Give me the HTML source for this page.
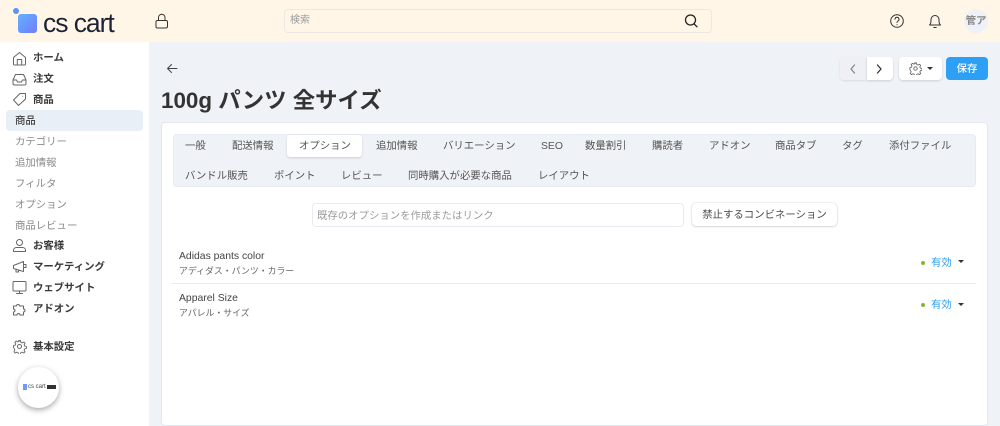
<!DOCTYPE html>
<html lang="ja"><head><meta charset="utf-8">
<style>
html,body{margin:0;padding:0;width:1000px;height:426px;overflow:hidden;background:#eff3f8}
body{font-family:"Liberation Sans","Noto Sans CJK JP",sans-serif;position:relative;color:#333}
.a,.t,.n,.s,.b{position:absolute;white-space:nowrap}
.t{font-size:10.4px;line-height:16px;color:#555;margin-top:1px}
.n{font-size:10.4px;line-height:16px;font-weight:700;color:#3a3a3a;left:33px;margin-top:1px}
.s{font-size:10.4px;line-height:16px;color:#8a8a8a;left:15px;margin-top:1px}
svg{position:absolute;fill:none;stroke:#666;stroke-width:1;stroke-linecap:round;stroke-linejoin:round}
</style></head><body>
<div class="a" style="left:0;top:0;width:1000px;height:42px;background:#fff6e8"></div>
<div class="a" style="left:13px;top:8px;width:6px;height:6px;border-radius:50%;background:#5c93fb"></div>
<div class="a" style="left:18px;top:14px;width:19px;height:19px;border-radius:3px;background:linear-gradient(135deg,#66b0ff,#6f7dfb)"></div>
<div class="a" style="left:43px;top:8px;font-size:26.500px;line-height:30px;letter-spacing:-1.050px;color:#1d2236">cs cart</div>
<svg style="left:154px;top:13px" width="16" height="17" viewBox="0 0 16 17"><rect x="2" y="7.500" width="11.500" height="7.500" rx="1.500" stroke="#333"/><path d="M4.500 7.500V4.500a3.200 3.200 0 0 1 6.500 0v3" stroke="#333"/></svg>
<div class="a" style="left:284px;top:9px;width:426px;height:22px;border:1px solid #ece8df;border-radius:4px"></div>
<div class="a" style="left:290px;top:14px;font-size:10px;line-height:14px;color:#9b9b9b">検索</div>
<svg style="left:683px;top:13px" width="16" height="16" viewBox="0 0 16 16"><circle cx="7.500" cy="7" r="5" stroke="#222" stroke-width="1.300"/><path d="M11 10.800l3 3" stroke="#222" stroke-width="1.300"/></svg>
<svg style="left:889px;top:13px" width="16" height="16" viewBox="0 0 16 16"><circle cx="8" cy="8" r="6.300" stroke="#333"/><path d="M6 6.300a2 2 0 1 1 3 1.700c-.7.400-1 .8-1 1.500M8 11.600v.2" stroke="#333"/></svg>
<svg style="left:927px;top:13px" width="16" height="16" viewBox="0 0 16 16"><path d="M2.500 12h11c-1.200-1.200-1.500-2-1.500-5.500a4 4 0 0 0-8 0C4 10 3.700 10.800 2.500 12zM6.800 14.500h2.400" stroke="#333"/></svg>
<div class="a" style="left:964px;top:9px;width:24px;height:24px;border-radius:50%;background:#eef1f7;font-size:10.400px;line-height:26px;text-align:center;font-weight:700;color:#888">管ア</div>

<div class="a" style="left:0;top:42px;width:149px;height:384px;background:#fff"></div>
<div class="a" style="left:6px;top:110px;width:137px;height:21px;border-radius:4px;background:#e9eff7"></div>
<svg style="left:12px;top:51px" width="15" height="15" viewBox="0 0 15 15"><path d="M1.500 6.500L7.500 1.500l6 5V13a1 1 0 0 1-1 1h-10a1 1 0 0 1-1-1zM5.300 14V8.500h4.400V14"/></svg>
<div class="n" style="top:50px">ホーム</div>
<svg style="left:12px;top:72px" width="15" height="15" viewBox="0 0 15 15"><path d="M1 8l2.500-5.500h8L14 8v3.500a1.500 1.500 0 0 1-1.500 1.500h-10A1.500 1.500 0 0 1 1 11.500zM1 8h3.500l1 2h4l1-2H14"/></svg>
<div class="n" style="top:71px">注文</div>
<svg style="left:12px;top:92px" width="15" height="15" viewBox="0 0 15 15"><path d="M13.500 1.500v5.500l-7 6.500-5-5.500 6.500-6.500zM10.800 4.200v.1"/></svg>
<div class="n" style="top:92px">商品</div>
<div class="n" style="left:15px;top:113px;font-weight:500;color:#444">商品</div>
<div class="s" style="top:134px">カテゴリー</div>
<div class="s" style="top:155px">追加情報</div>
<div class="s" style="top:176px">フィルタ</div>
<div class="s" style="top:197px">オプション</div>
<div class="s" style="top:218px">商品レビュー</div>
<svg style="left:12px;top:238px" width="15" height="15" viewBox="0 0 15 15"><circle cx="7.500" cy="4.500" r="3"/><path d="M1.500 13.500v-1.500a3 3 0 0 1 3-2.500h6a3 3 0 0 1 3 2.500v1.500z"/></svg>
<div class="n" style="top:238px">お客様</div>
<svg style="left:12px;top:259px" width="15" height="15" viewBox="0 0 15 15"><path d="M1.500 6.500L11.500 2.500v10L1.500 9.500zM4 10.300v2.700h2.500v-2M11.500 5.500h2.500v3h-2.500"/></svg>
<div class="n" style="top:259px">マーケティング</div>
<svg style="left:12px;top:280px" width="15" height="15" viewBox="0 0 15 15"><rect x="1" y="1.500" width="13" height="9.500" rx="1"/><path d="M7.500 11v2.500M4.500 13.500h6"/></svg>
<div class="n" style="top:280px">ウェブサイト</div>
<svg style="left:12px;top:301px" width="15" height="15" viewBox="0 0 15 15"><path d="M1.500 5h3a1.500 1.500 0 1 1 3 0h4v3a1.500 1.500 0 1 1 0 3v3h-3.500a1.500 1.500 0 1 0-3 0H1.500v-3a1.500 1.500 0 1 0 0-3z"/></svg>
<div class="n" style="top:301px">アドオン</div>
<svg style="left:12px;top:339px" width="15" height="15" viewBox="0 0 15 15"><circle cx="7.500" cy="7.500" r="2"/><path d="M6.500 1h2l.4 1.900 1.500.7 1.700-1 1.400 1.400-1 1.700.7 1.500 1.800.4v2l-1.800.4-.7 1.500 1 1.700-1.400 1.400-1.700-1-1.500.7-.4 1.800h-2l-.4-1.800-1.500-.7-1.700 1-1.400-1.400 1-1.700-.7-1.500L1 8.500v-2l1.800-.4.700-1.500-1-1.700 1.400-1.400 1.700 1 1.500-.7z" transform="translate(.6 .6) scale(.92)"/></svg>
<div class="n" style="top:339px">基本設定</div>
<div class="a" style="left:18px;top:367px;width:41px;height:41px;border-radius:50%;background:#fff;box-shadow:0 2px 6px rgba(0,0,0,.35)"></div>
<div class="a" style="left:23px;top:384px;width:4px;height:6px;background:#6b9cfb"></div>
<div class="a" style="left:28px;top:384px;font-size:6px;line-height:7px;color:#444">cs cart</div>
<div class="a" style="left:47px;top:385px;width:9px;height:4px;background:#333"></div>

<svg style="left:165px;top:61px" width="15" height="15" viewBox="0 0 15 15"><path d="M12 7.500H2.500M6.500 3.500l-4 4 4 4" stroke="#444"/></svg>
<div class="a" style="left:161px;top:86px;font-size:22.400px;line-height:30px;font-weight:700;color:#333">100g パンツ 全サイズ</div>

<div class="a" style="left:840px;top:57px;width:26px;height:23px;background:#eef0f5;border-radius:4px 0 0 4px;box-shadow:0 1px 2px rgba(0,0,0,.1)"></div>
<div class="a" style="left:867px;top:57px;width:26px;height:23px;background:#fff;border-radius:0 4px 4px 0;box-shadow:0 1px 2px rgba(0,0,0,.15)"></div>
<svg style="left:847px;top:62px" width="12" height="14" viewBox="0 0 12 14"><path d="M7.500 3L4 7l3.500 4" stroke="#888" stroke-width="1.300"/></svg>
<svg style="left:873px;top:62px" width="12" height="14" viewBox="0 0 12 14"><path d="M4.500 3L8 7l-3.500 4" stroke="#333" stroke-width="1.300"/></svg>
<div class="a" style="left:899px;top:57px;width:43px;height:23px;background:#fff;border-radius:4px;box-shadow:0 1px 2px rgba(0,0,0,.15)"></div>
<svg style="left:909px;top:62px" width="13" height="13" viewBox="0 0 15 15"><circle cx="7.500" cy="7.500" r="2"/><path d="M6.500 1h2l.4 1.900 1.500.7 1.700-1 1.400 1.400-1 1.700.7 1.500 1.800.4v2l-1.800.4-.7 1.500 1 1.700-1.400 1.400-1.700-1-1.500.7-.4 1.800h-2l-.4-1.800-1.500-.7-1.700 1-1.400-1.400 1-1.700-.7-1.500L1 8.500v-2l1.800-.4.700-1.500-1-1.700 1.400-1.400 1.700 1 1.500-.7z"/></svg>
<div class="a" style="left:927px;top:67px;border:3px solid transparent;border-top:3px solid #333;border-bottom:0"></div>
<div class="a" style="left:946px;top:57px;width:42px;height:23px;background:#2d9ff5;border-radius:4px;color:#fff;font-size:10.400px;line-height:25px;text-align:center;font-weight:500">保存</div>

<div class="a" style="left:161px;top:122px;width:827px;height:304px;background:#fff;border:1px solid #e3e8f0;border-radius:4px;box-sizing:border-box"></div>
<div class="a" style="left:173px;top:134px;width:803px;height:53px;background:#eff2f7;border:1px solid #e6eaf1;border-radius:4px;box-sizing:border-box"></div>
<div class="a" style="left:287px;top:135px;width:75px;height:22px;background:#fff;border-radius:3px;box-shadow:0 1px 2px rgba(0,0,0,.15)"></div>
<div class="t" style="left:185px;top:138px">一般</div>
<div class="t" style="left:232px;top:138px">配送情報</div>
<div class="t" style="left:299px;top:138px">オプション</div>
<div class="t" style="left:376px;top:138px">追加情報</div>
<div class="t" style="left:443px;top:138px">バリエーション</div>
<div class="t" style="left:541px;top:138px">SEO</div>
<div class="t" style="left:585px;top:138px">数量割引</div>
<div class="t" style="left:652px;top:138px">購読者</div>
<div class="t" style="left:709px;top:138px">アドオン</div>
<div class="t" style="left:775px;top:138px">商品タブ</div>
<div class="t" style="left:842px;top:138px">タグ</div>
<div class="t" style="left:889px;top:138px">添付ファイル</div>
<div class="t" style="left:185px;top:168px">バンドル販売</div>
<div class="t" style="left:274px;top:168px">ポイント</div>
<div class="t" style="left:341px;top:168px">レビュー</div>
<div class="t" style="left:408px;top:168px">同時購入が必要な商品</div>
<div class="t" style="left:538px;top:168px">レイアウト</div>

<div class="a" style="left:312px;top:203px;width:372px;height:24px;border:1px solid #e8ebf0;border-radius:4px;box-sizing:border-box;padding-left:4px;font-size:10.400px;line-height:25px;color:#9b9b9b">既存のオプションを作成またはリンク</div>
<div class="a" style="left:692px;top:203px;width:145px;height:23px;background:#fff;border-radius:4px;box-shadow:0 0 1px rgba(0,0,0,.3),0 1px 2px rgba(0,0,0,.12);font-size:10.400px;line-height:25px;text-align:center;color:#4a4a4a">禁止するコンビネーション</div>

<div class="a" style="left:179px;top:250px;font-size:10.400px;line-height:14px;color:#444">Adidas pants color</div>
<div class="a" style="left:179px;top:265px;font-size:8.900px;line-height:13px;color:#666">アディダス・パンツ・カラー</div>
<div class="a" style="left:172px;top:283px;width:804px;height:1px;background:#e6ebf1"></div>
<div class="a" style="left:179px;top:292px;font-size:10.400px;line-height:14px;color:#444">Apparel Size</div>
<div class="a" style="left:179px;top:307px;font-size:8.900px;line-height:13px;color:#666">アパレル・サイズ</div>
<div class="a" style="left:921px;top:261px;width:4px;height:4px;border-radius:50%;background:#7fb83a"></div>
<div class="a" style="left:931px;top:257px;font-size:10.400px;line-height:14px;color:#2d9ff5">有効</div>
<div class="a" style="left:958px;top:260px;border:3.500px solid transparent;border-top:3.500px solid #333;border-bottom:0"></div>
<div class="a" style="left:921px;top:303px;width:4px;height:4px;border-radius:50%;background:#7fb83a"></div>
<div class="a" style="left:931px;top:299px;font-size:10.400px;line-height:14px;color:#2d9ff5">有効</div>
<div class="a" style="left:958px;top:303px;border:3.500px solid transparent;border-top:3.500px solid #333;border-bottom:0"></div>
</body></html>
